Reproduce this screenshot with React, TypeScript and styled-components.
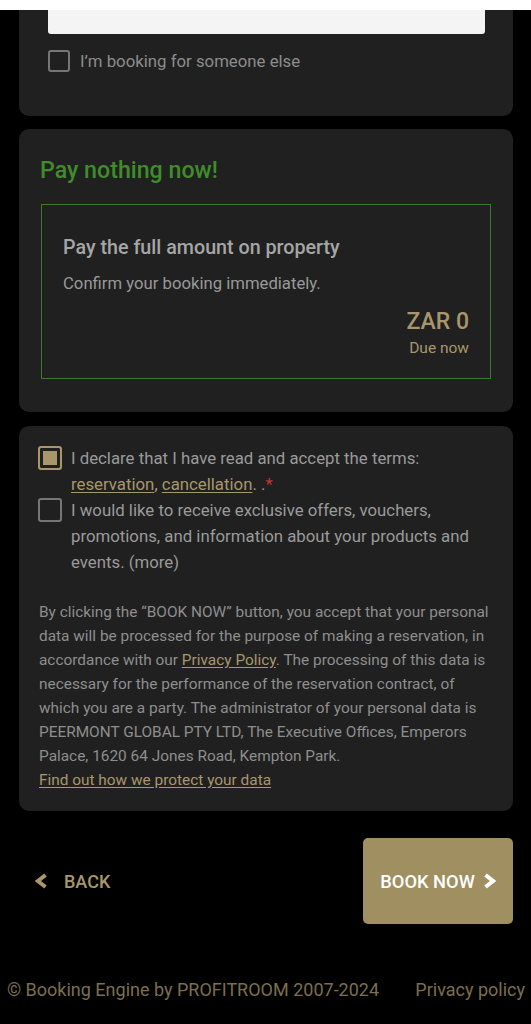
import React from "react";
import styled, { createGlobalStyle } from "styled-components";

const GOLD = "#a8976a";

const Global = createGlobalStyle`
  html, body { margin: 0; padding: 0; background: #000; }
  body { font-family: Roboto, "Noto Sans", Arial, sans-serif; -webkit-font-smoothing: antialiased; }
  * { box-sizing: border-box; }
`;

const Page = styled.div`
  width: 531px;
  min-height: 1024px;
  background: #000;
  display: flex;
  flex-direction: column;
`;

const StatusStrip = styled.div`
  height: 10px;
  background: #ffffff;
`;

const Card = styled.section<{ $top?: number }>`
  margin: ${(p) => p.$top ?? 0}px 18px 0 19px;
  background: #202020;
  border-radius: 10px;
`;

const GuestCard = styled(Card)`
  border-radius: 0 0 10px 10px;
  padding: 0 28px 44px 29px;
`;

const InputStub = styled.div`
  height: 24px;
  background: #f4f4f4;
  border-radius: 0 0 3px 3px;
`;

const CheckRow = styled.label<{ $gap?: number }>`
  display: flex;
  align-items: flex-start;
  gap: ${(p) => p.$gap ?? 9}px;
  cursor: pointer;
`;

const Box = styled.span<{ $size: number; $checked?: boolean }>`
  flex: none;
  width: ${(p) => p.$size}px;
  height: ${(p) => p.$size}px;
  border: 2px solid ${(p) => (p.$checked ? GOLD : "#767676")};
  border-radius: 3px;
  background: ${(p) => (p.$checked ? GOLD : "transparent")};
  box-shadow: ${(p) => (p.$checked ? "inset 0 0 0 3px #202020" : "none")};
`;

const GuestCheckRow = styled(CheckRow)`
  margin-top: 16px;
  align-items: center;
`;

const GuestLabel = styled.span`
  font-size: 16.8px;
  line-height: 22px;
  color: #8c8c8c;
`;

const PayCard = styled(Card)`
  padding: 26px 22px 33px 21px;
`;

const PayHeading = styled.h2`
  margin: 0 0 19px;
  font-size: 23.2px;
  line-height: 30px;
  font-weight: 500;
  color: #3f8c2b;
`;

const PayOption = styled.div`
  margin-left: 1px;
  border: 1px solid #3a7a2b;
  padding: 30px 21px 20px 21px;
  display: flex;
  flex-direction: column;
`;

const OptionTitle = styled.div`
  font-size: 19.7px;
  line-height: 26px;
  font-weight: 500;
  color: #a6a6a6;
`;

const OptionText = styled.div`
  margin-top: 11px;
  font-size: 16.7px;
  line-height: 24px;
  color: #999999;
`;

const Amount = styled.div`
  margin-top: 12px;
  align-self: flex-end;
  text-align: right;
  display: flex;
  flex-direction: column;
`;

const AmountValue = styled.span`
  font-size: 23px;
  line-height: 28px;
  font-weight: 500;
  color: ${GOLD};
`;

const AmountNote = styled.span`
  margin-top: 2px;
  font-size: 15.5px;
  line-height: 20px;
  color: ${GOLD};
`;

const TermsCard = styled(Card)`
  padding: 19px 20px 19px 19px;
`;

const ConsentRow = styled(CheckRow)`
  & > span:first-child { margin-top: 1px; }
`;

const ConsentText = styled.span`
  font-size: 16.8px;
  line-height: 26px;
  color: #9a9a9a;
`;

const GoldLink = styled.a`
  color: ${GOLD};
  text-decoration: underline;
  text-underline-offset: 2px;
`;

const Required = styled.span`
  color: #c0392b;
`;

const Legal = styled.p`
  margin: 25px 0 0 1px;
  font-size: 15.4px;
  line-height: 24px;
  color: #8e8e8e;
`;

const BlockLink = styled(GoldLink)`
  display: block;
`;

const Actions = styled.div`
  margin: 27px 18px 0 19px;
  display: flex;
  justify-content: space-between;
  align-items: center;
`;

const BackButton = styled.button`
  background: none;
  border: none;
  padding: 0 0 0 16px;
  display: flex;
  align-items: center;
  gap: 16px;
  color: ${GOLD};
  font-family: inherit;
  font-size: 18px;
  font-weight: 500;
  cursor: pointer;
`;

const BookButton = styled.button`
  width: 150px;
  height: 86px;
  border: none;
  border-radius: 5px;
  background: #a08f60;
  color: #ffffff;
  font-family: inherit;
  font-size: 18.3px;
  font-weight: 500;
  display: flex;
  align-items: center;
  justify-content: center;
  gap: 8px;
  cursor: pointer;
`;

const Footer = styled.footer`
  margin-top: 54px;
  padding: 0 6px 0 7px;
  display: flex;
  justify-content: space-between;
  font-size: 18px;
  line-height: 24px;
  color: #7b6f4d;
`;

function Chevron({ dir }: { dir: "left" | "right" }) {
  const pts = dir === "left" ? "10.5,2 3,8 10.5,14" : "2.5,2 10,8 2.5,14";
  return (
    <svg width="13" height="16" viewBox="0 0 13 16" aria-hidden="true">
      <polyline
        points={pts}
        fill="none"
        stroke="currentColor"
        strokeWidth="4"
        strokeLinecap="butt"
        strokeLinejoin="miter"
      />
    </svg>
  );
}

export default function App() {
  return (
    <Page>
      <Global />
      <StatusStrip />
      <GuestCard>
        <InputStub />
        <GuestCheckRow $gap={10}>
          <Box $size={22} />
          <GuestLabel>I’m booking for someone else</GuestLabel>
        </GuestCheckRow>
      </GuestCard>

      <PayCard $top={13}>
        <PayHeading>Pay nothing now!</PayHeading>
        <PayOption>
          <OptionTitle>Pay the full amount on property</OptionTitle>
          <OptionText>Confirm your booking immediately.</OptionText>
          <Amount>
            <AmountValue>ZAR 0</AmountValue>
            <AmountNote>Due now</AmountNote>
          </Amount>
        </PayOption>
      </PayCard>

      <TermsCard $top={14}>
        <ConsentRow>
          <Box $size={24} $checked />
          <ConsentText>
            I declare that I have read and accept the terms:{" "}
            <GoldLink>reservation</GoldLink>, <GoldLink>cancellation</GoldLink>. .
            <Required>*</Required>
          </ConsentText>
        </ConsentRow>
        <ConsentRow>
          <Box $size={24} />
          <ConsentText>
            I would like to receive exclusive offers, vouchers, promotions, and
            information about your products and events. (more)
          </ConsentText>
        </ConsentRow>
        <Legal>
          By clicking the “BOOK NOW” button, you accept that your personal data
          will be processed for the purpose of making a reservation, in
          accordance with our <GoldLink>Privacy Policy</GoldLink>. The processing
          of this data is necessary for the performance of the reservation
          contract, of which you are a party. The administrator of your personal
          data is PEERMONT GLOBAL PTY LTD, The Executive Offices, Emperors
          Palace, 1620 64 Jones Road, Kempton Park.
          <BlockLink>Find out how we protect your data</BlockLink>
        </Legal>
      </TermsCard>

      <Actions>
        <BackButton>
          <Chevron dir="left" />
          BACK
        </BackButton>
        <BookButton>
          BOOK NOW
          <Chevron dir="right" />
        </BookButton>
      </Actions>

      <Footer>
        <span>© Booking Engine by PROFITROOM 2007-2024</span>
        <span>Privacy policy</span>
      </Footer>
    </Page>
  );
}
